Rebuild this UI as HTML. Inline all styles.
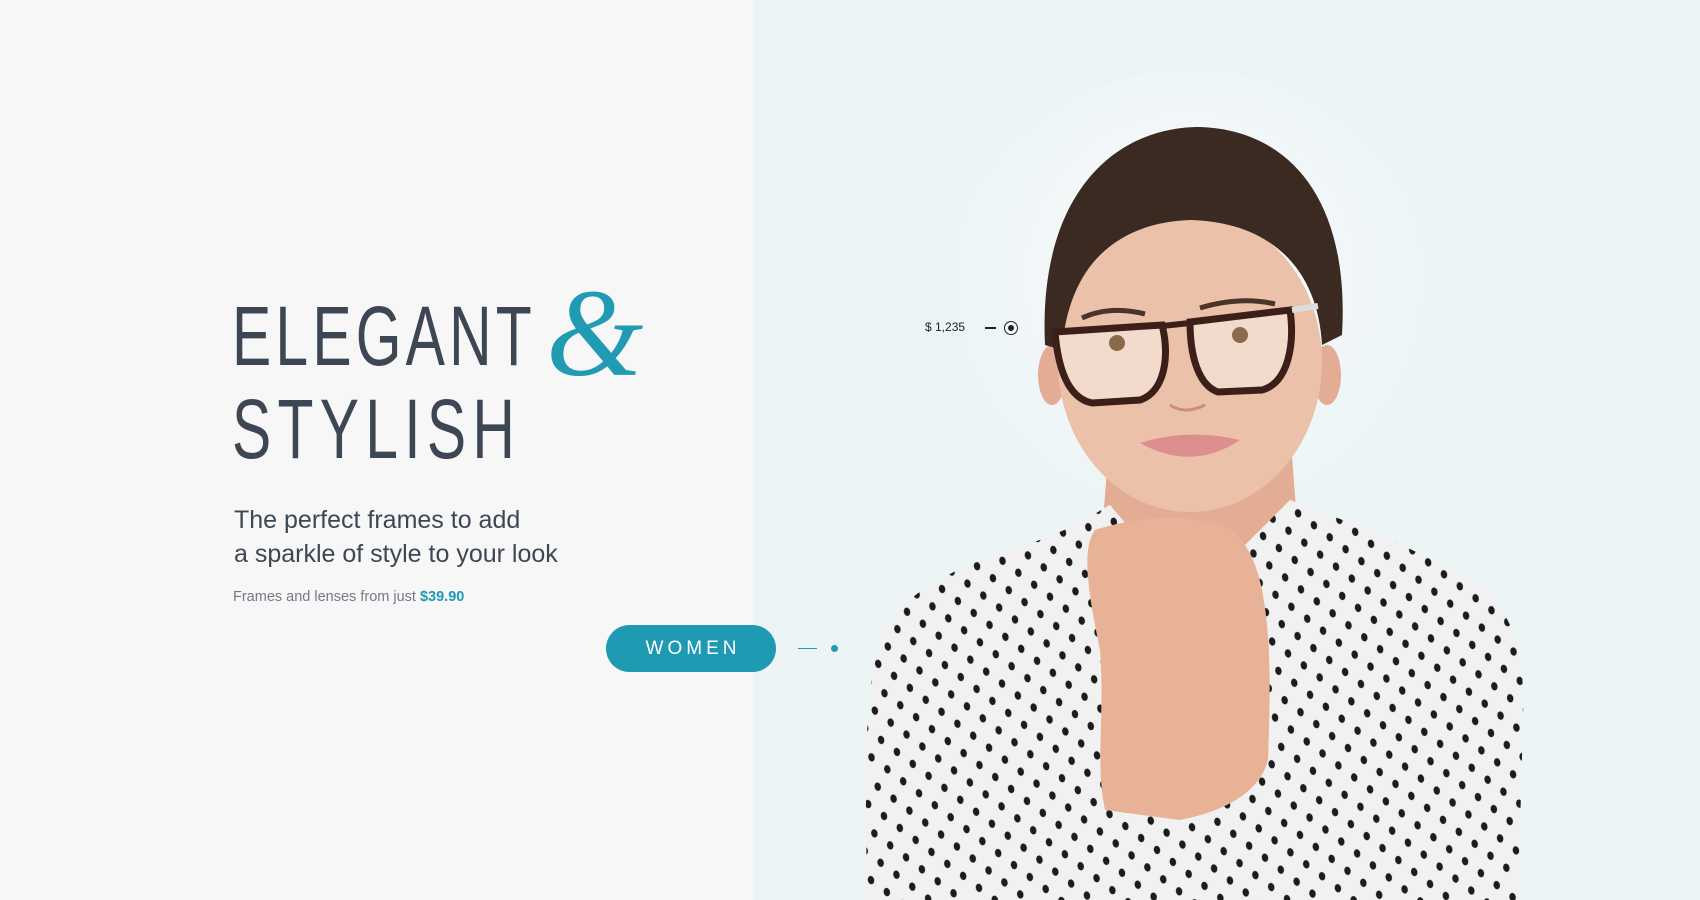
<!DOCTYPE html>
<html><head><meta charset="utf-8"><style>
*{margin:0;padding:0;box-sizing:border-box}
body{width:1700px;height:900px;overflow:hidden;position:relative;background:#f7f7f7;font-family:"Liberation Sans",sans-serif}
.right{position:absolute;left:753px;top:0;width:947px;height:900px;background:#ecf4f5}
.h{position:absolute;left:232px;color:#3d4754;font-family:"Liberation Sans",sans-serif;font-size:84px;line-height:84px;letter-spacing:6px;white-space:nowrap;transform:scaleX(0.70);transform-origin:0 0}
.amp{position:absolute;left:546px;top:272px;color:#219bb3;font-family:"Liberation Serif",serif;font-style:italic;font-size:125px;line-height:125px}
.sub{position:absolute;left:234px;top:503px;color:#3d4754;font-size:25px;line-height:34px}
.small{position:absolute;left:233px;top:589px;color:#737b86;font-size:14.5px}
.small b{color:#219bb3}
.btn{position:absolute;left:606px;top:625px;width:170px;height:47px;border-radius:24px;background:#1f9ab2;color:#fff;font-size:19px;letter-spacing:4px;text-align:center;line-height:47px;padding-left:4px}
.ln{position:absolute;left:798px;top:648px;width:19px;height:1px;background:#219bb3}
.dot{position:absolute;left:831px;top:645px;width:7px;height:7px;border-radius:50%;background:#219bb3}
.price{position:absolute;left:925px;top:320px;font-size:12px;color:#222}
.pd{position:absolute;left:985px;top:327px;width:11px;height:1.5px;background:#222}
.tg{position:absolute;left:1004px;top:321px;width:14px;height:14px;border:1.5px solid #222;border-radius:50%}
.tg:after{content:"";position:absolute;left:2.5px;top:2.5px;width:6px;height:6px;border-radius:50%;background:#222}
svg{position:absolute;left:0;top:0}
</style></head><body>
<div class="right"></div>
<svg width="1700" height="900" viewBox="0 0 1700 900">
<defs>
<pattern id="pd" width="26" height="30" patternUnits="userSpaceOnUse" patternTransform="rotate(-12)">
<rect width="26" height="30" fill="#f1f1f1"/>
<ellipse cx="6" cy="7" rx="3.2" ry="4.2" fill="#1c1c1c"/>
<ellipse cx="19" cy="22" rx="3.2" ry="4.2" fill="#1c1c1c"/>
</pattern>
<radialGradient id="glow" cx="0.5" cy="0.4" r="0.5"><stop offset="0" stop-color="#ffffff" stop-opacity=".7"/><stop offset="1" stop-color="#ffffff" stop-opacity="0"/></radialGradient>
</defs>
<ellipse cx="1190" cy="330" rx="260" ry="260" fill="url(#glow)"/>
<path d="M1110 430 L1290 430 L1300 560 L1100 560 Z" fill="#e3ad95"/>
<path d="M867 900 C866 800 862 700 880 640 C900 590 960 565 1040 540 C1080 525 1100 510 1110 505 L1190 600 L1290 500 C1330 515 1400 540 1470 580 C1515 610 1525 650 1523 720 L1518 900 Z" fill="url(#pd)"/>
<path d="M1095 530 C1080 550 1090 600 1100 650 C1105 720 1095 760 1105 810 L1180 820 C1230 810 1260 790 1268 760 C1270 700 1272 640 1262 590 C1255 555 1240 530 1220 525 C1190 515 1140 515 1095 530 Z" fill="#e8b297"/>
<ellipse cx="1052" cy="375" rx="14" ry="30" fill="#e3ad95"/>
<ellipse cx="1327" cy="375" rx="14" ry="30" fill="#e3ad95"/>
<ellipse cx="1190" cy="362" rx="132" ry="150" fill="#ecc1aa"/>
<path d="M1045 345 C1038 200 1110 127 1200 127 C1290 130 1350 200 1342 335 L1322 345 C1318 270 1272 222 1190 220 C1112 223 1068 270 1062 350 Z" fill="#3b2a22"/>
<path d="M1082 318 Q1110 305 1145 314" stroke="#4a3328" stroke-width="5" fill="none"/>
<path d="M1200 308 Q1240 296 1275 304" stroke="#4a3328" stroke-width="5" fill="none"/>
<path d="M1055 332 L1162 325 C1170 355 1165 392 1140 400 L1092 403 C1068 398 1058 368 1055 332 Z" fill="#f2dacd" stroke="#3d1f1a" stroke-width="7"/>
<path d="M1190 322 L1290 310 C1295 345 1288 383 1262 390 L1218 392 C1198 385 1190 355 1190 322 Z" fill="#f2dacd" stroke="#3d1f1a" stroke-width="7"/>
<path d="M1162 326 L1190 323" stroke="#3d1f1a" stroke-width="6"/>
<path d="M1292 310 L1318 306" stroke="#ddd" stroke-width="6"/>
<circle cx="1117" cy="343" r="8" fill="#8a6a4c"/><circle cx="1240" cy="335" r="8" fill="#8a6a4c"/>
<path d="M1170 405 Q1185 415 1205 405" stroke="#c98f78" stroke-width="3" fill="none"/>
<path d="M1140 443 Q1188 428 1240 440 Q1192 472 1140 443 Z" fill="#dc8f8e"/>
</svg>
<div class="h" style="top:294px">ELEGANT</div>
<div class="h" style="top:387px;letter-spacing:9px">STYLISH</div>
<div class="amp">&amp;</div>
<div class="sub">The perfect frames to add<br>a sparkle of style to your look</div>
<div class="small">Frames and lenses from just <b>$39.90</b></div>
<div class="btn">WOMEN</div>
<div class="ln"></div><div class="dot"></div>
<div class="price">$ 1,235</div><div class="pd"></div><div class="tg"></div>
</body></html>
